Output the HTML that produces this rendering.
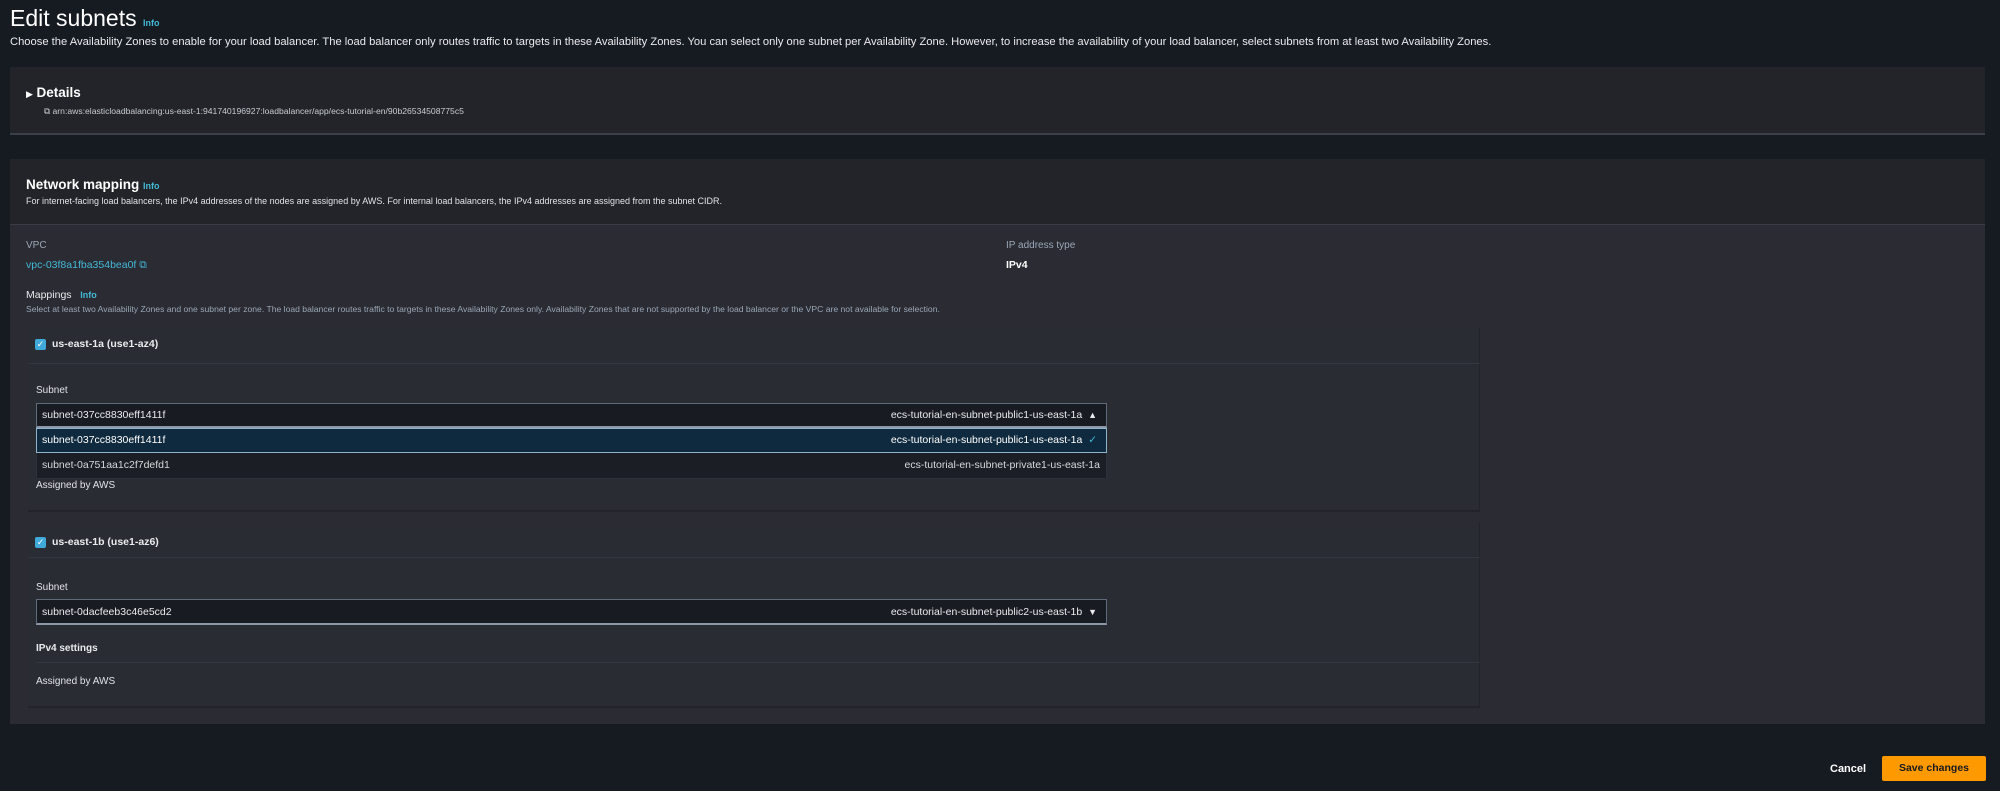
<!DOCTYPE html>
<html><head><meta charset="utf-8"><style>
*{margin:0;padding:0;box-sizing:border-box}
body{width:2000px;height:791px;background:#161a21;font-family:"Liberation Sans",sans-serif;color:#d5dbdb;position:relative;overflow:hidden;font-size:11px}
.a{position:absolute;white-space:nowrap}
.info{color:#44b9d6;font-weight:bold;font-size:9px}
.b{font-weight:bold;color:#fff}
.g{color:#9ba7b6}
.r{position:absolute;white-space:nowrap;text-align:right}
</style></head><body>
<div class="a" style="left:10px;top:5px;font-size:23px;color:#fff">Edit subnets <span class="info">Info</span></div>
<div class="a" style="left:10px;top:36px;font-size:11.2px;color:#e9ebed">Choose the Availability Zones to enable for your load balancer. The load balancer only routes traffic to targets in these Availability Zones. You can select only one subnet per Availability Zone. However, to increase the availability of your load balancer, select subnets from at least two Availability Zones.</div>

<div class="a" style="left:10px;top:67px;width:1975px;height:68px;background:#22242a;border-bottom:2px solid #3b3f47"></div>
<div class="a" style="left:26px;top:85px;font-size:13px" ><span style="font-size:9px;color:#fff">▶</span> <span class="b" style="font-size:13.5px">Details</span></div>
<div class="a" style="left:44px;top:106px;font-size:8.6px;color:#c8cdd3">⧉ arn:aws:elasticloadbalancing:us-east-1:941740196927:loadbalancer/app/ecs-tutorial-en/90b26534508775c5</div>

<div class="a" style="left:10px;top:159px;width:1975px;height:565px;background:#22242a"></div>
<div class="a" style="left:10px;top:224px;width:1975px;height:500px;background:#2a2b33;border-top:1px solid #3a3d45"></div>
<div class="a" style="left:26px;top:177px;font-size:13.5px" ><span class="b">Network mapping</span> <span class="info">Info</span></div>
<div class="a" style="left:26px;top:196px;font-size:9px;color:#e0e3e6">For internet-facing load balancers, the IPv4 addresses of the nodes are assigned by AWS. For internal load balancers, the IPv4 addresses are assigned from the subnet CIDR.</div>
<div class="a g" style="left:26px;top:240px;font-size:10px">VPC</div>
<div class="a" style="left:26px;top:259px;font-size:10.5px;color:#44b9d6">vpc-03f8a1fba354bea0f ⧉</div>
<div class="a g" style="left:1006px;top:240px;font-size:10px">IP address type</div>
<div class="a b" style="left:1006px;top:259px;font-size:10.5px">IPv4</div>
<div class="a" style="left:26px;top:289px;font-size:10.5px;color:#e9ebed">Mappings &nbsp;&nbsp;<span class="info">Info</span></div>
<div class="a g" style="left:26px;top:304px;font-size:8.6px">Select at least two Availability Zones and one subnet per zone. The load balancer routes traffic to targets in these Availability Zones only. Availability Zones that are not supported by the load balancer or the VPC are not available for selection.</div>

<!-- zone 1 -->
<div class="a" style="left:28px;top:327px;width:1452px;height:185px;background:#2a2c34;border-bottom:2px solid #22242a;border-right:1px solid #22242a"></div>
<div class="a" style="left:28px;top:363px;width:1452px;height:1px;background:#33363e"></div>
<div class="a" style="left:35px;top:339px;width:11px;height:11px;background:#3fa9d9;border-radius:2px;color:#fff;font-size:9px;line-height:11px;text-align:center">✓</div>
<div class="a b" style="left:52px;top:338px;font-size:10.5px;color:#e9ebed">us-east-1a (use1-az4)</div>
<div class="a" style="left:36px;top:385px;font-size:10px;color:#e0e3e6">Subnet</div>
<div class="a" style="left:36px;top:403px;width:1071px;height:25px;background:#181b22;border:1px solid #5f6b7a;border-bottom:2px solid #8d99a8"></div>
<div class="a" style="left:42px;top:409px;font-size:10.5px;color:#e9ebed">subnet-037cc8830eff1411f</div>
<div class="r" style="right:903px;top:409px;font-size:10.5px;color:#e9ebed">ecs-tutorial-en-subnet-public1-us-east-1a &nbsp;<span style="font-size:9px">▲</span></div>
<div class="a" style="left:36px;top:428px;width:1071px;height:51px;background:#1b1e25;border:1px solid #2c3038"></div>
<div class="a" style="left:36px;top:428px;width:1071px;height:25px;background:#0f2a3e;border:1px solid #8fb4cc"></div>
<div class="a" style="left:42px;top:434px;font-size:10.5px;color:#fff">subnet-037cc8830eff1411f</div>
<div class="r" style="right:903px;top:434px;font-size:10.5px;color:#fff">ecs-tutorial-en-subnet-public1-us-east-1a &nbsp;<span style="color:#44b9d6">✓</span></div>
<div class="a" style="left:42px;top:459px;font-size:10.5px;color:#d5dbdb">subnet-0a751aa1c2f7defd1</div>
<div class="r" style="right:900px;top:459px;font-size:10.5px;color:#d5dbdb">ecs-tutorial-en-subnet-private1-us-east-1a</div>
<div class="a" style="left:36px;top:480px;font-size:10px;color:#e0e3e6">Assigned by AWS</div>

<!-- zone 2 -->
<div class="a" style="left:28px;top:522px;width:1452px;height:186px;background:#2a2c34;border-bottom:2px solid #22242a;border-right:1px solid #22242a"></div>
<div class="a" style="left:28px;top:557px;width:1452px;height:1px;background:#33363e"></div>
<div class="a" style="left:35px;top:537px;width:11px;height:11px;background:#3fa9d9;border-radius:2px;color:#fff;font-size:9px;line-height:11px;text-align:center">✓</div>
<div class="a b" style="left:52px;top:536px;font-size:10.5px;color:#e9ebed">us-east-1b (use1-az6)</div>
<div class="a" style="left:36px;top:582px;font-size:10px;color:#e0e3e6">Subnet</div>
<div class="a" style="left:36px;top:599px;width:1071px;height:26px;background:#181b22;border:1px solid #5f6b7a;border-bottom:2px solid #8d99a8"></div>
<div class="a" style="left:42px;top:606px;font-size:10.5px;color:#e9ebed">subnet-0dacfeeb3c46e5cd2</div>
<div class="r" style="right:903px;top:606px;font-size:10.5px;color:#e9ebed">ecs-tutorial-en-subnet-public2-us-east-1b &nbsp;<span style="font-size:9px">▼</span></div>
<div class="a b" style="left:36px;top:643px;font-size:10px;color:#e9ebed">IPv4 settings</div>
<div class="a" style="left:36px;top:662px;width:1444px;height:1px;background:#33363e"></div>
<div class="a" style="left:36px;top:676px;font-size:10px;color:#e0e3e6">Assigned by AWS</div>

<div class="a b" style="left:1830px;top:763px;font-size:11px">Cancel</div>
<div class="a" style="left:1882px;top:756px;width:104px;height:25px;background:#ff9900;border-radius:2px;color:#16191f;font-weight:bold;font-size:10.5px;text-align:center;line-height:25px">Save changes</div>
</body></html>
